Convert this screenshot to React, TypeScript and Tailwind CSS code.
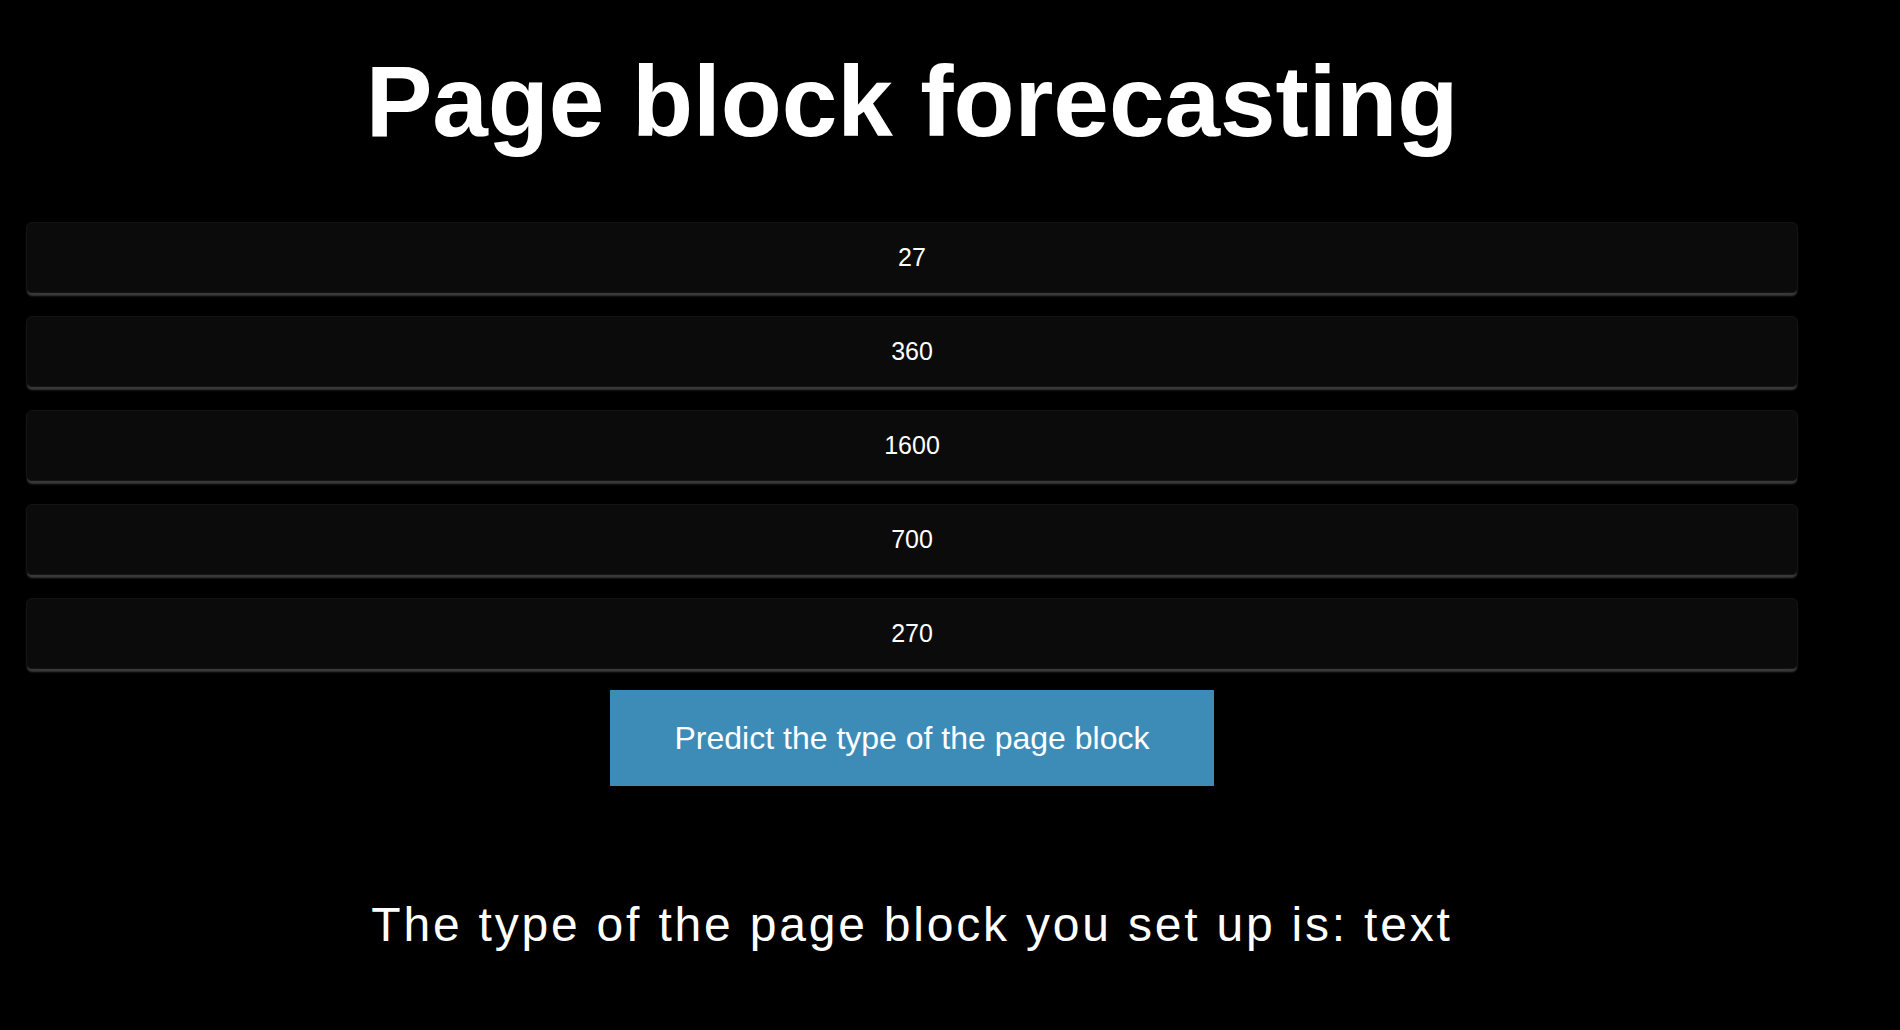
import React, { useState } from 'react'

const fields = ['27', '360', '1600', '700', '270']

const App = () => {
    const [values, setValues] = useState(fields)
    return (
        <div className="min-h-[1030px] w-full bg-black text-white" style={{ fontFamily: '"Liberation Sans", Arial, sans-serif' }}>
            <div className="w-[1824px] flex flex-col items-center px-[26px]">
                <h1 className="mt-[51px] text-[100px] leading-none font-bold tracking-[-0.1px]">Page block forecasting</h1>
                <div className="mt-[71px] w-full flex flex-col gap-[23px]">
                    {values.map((v, i) => (
                        <input
                            key={i}
                            value={v}
                            onChange={(e) => {
                                const next = [...values]
                                next[i] = e.target.value
                                setValues(next)
                            }}
                            className="w-full h-[71px] rounded-[6px] bg-[#0b0b0b] border border-[#141414] text-center text-[25px] text-white outline-none shadow-[0_4px_2px_-1px_#3a3a3a]"
                        />
                    ))}
                </div>
                <button className="mt-[21px] h-[96px] px-[65px] bg-[#3d8cb8] text-[32px] text-white">
                    Predict the type of the page block
                </button>
                <p className="mt-[115px] text-[48px] leading-none tracking-[2.8px]">
                    The type of the page block you set up is: text
                </p>
            </div>
        </div>
    )
}

export default App
